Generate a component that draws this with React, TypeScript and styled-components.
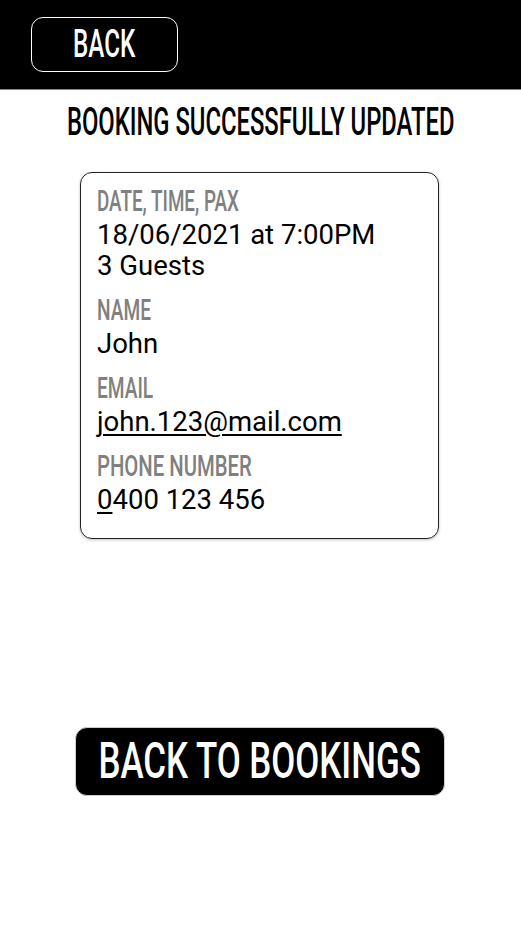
import React from "react";
import styled, { createGlobalStyle } from "styled-components";

const Global = createGlobalStyle`
  html, body { margin: 0; padding: 0; background: #fff; }
  body { font-family: Roboto, "Liberation Sans", sans-serif; }
`;

const Page = styled.div`
  width: 521px;
  min-height: 927px;
  display: flex;
  flex-direction: column;
  align-items: center;
  background: #fff;
  overflow: hidden;
`;

const Header = styled.header`
  align-self: stretch;
  height: 90px;
  background: #000;
  border-bottom: 1px solid #888;
  display: flex;
  align-items: flex-start;
  padding: 17px 0 0 31px;
  box-sizing: border-box;
`;

/* Condensed display text: a sans squeezed horizontally */
const Squeeze = styled.span<{ $scale: number; $origin?: string }>`
  display: inline-block;
  flex: none;
  white-space: nowrap;
  font-family: Roboto, "Liberation Sans", sans-serif;
  font-weight: 500;
  transform: scaleX(${(p) => p.$scale});
  transform-origin: ${(p) => p.$origin ?? "center"};
`;

const BackButton = styled.button`
  width: 147px;
  height: 55px;
  box-sizing: border-box;
  background: #000;
  border: 1.5px solid #fff;
  border-radius: 12px;
  color: #fff;
  font-size: 39px;
  line-height: 1;
  padding: 0;
  display: flex;
  align-items: center;
  justify-content: center;
`;

const Title = styled.h1`
  margin: 12px 0 0;
  width: 521px;
  display: flex;
  justify-content: center;
  font-size: 39px;
  font-weight: 500;
  color: #000;
  line-height: 40px;
`;

const Card = styled.section`
  margin-top: 30px;
  margin-left: -2px;
  width: 359px;
  box-sizing: border-box;
  border: 1.5px solid #222;
  border-radius: 12px;
  box-shadow: 0 1px 3px rgba(0, 0, 0, 0.25);
  padding: 11px 16px 23px;
  display: flex;
  flex-direction: column;
  gap: 12px;
`;

const Group = styled.div`
  display: flex;
  flex-direction: column;
  align-items: flex-start;
`;

const Label = styled.div`
  font-size: 29px;
  color: #808080;
  line-height: 35px;
`;

const Value = styled.div<{ $underline?: boolean }>`
  font-family: Roboto, "Liberation Sans", sans-serif;
  font-size: 27.5px;
  color: #000;
  line-height: 31px;
  text-decoration: ${(p) => (p.$underline ? "underline" : "none")};
  text-underline-offset: 3px;
  text-decoration-thickness: 1.5px;
`;

const Underlined = styled.span`
  text-decoration: underline;
  text-underline-offset: 3px;
  text-decoration-thickness: 1.5px;
`;

const PrimaryButton = styled.button`
  margin-top: 188px;
  margin-left: -2px;
  width: 370px;
  height: 69px;
  box-sizing: border-box;
  background: #000;
  border: 1px solid #ccc;
  border-radius: 12px;
  color: #fff;
  font-size: 50.5px;
  line-height: 1;
  padding: 0;
  display: flex;
  align-items: center;
  justify-content: center;
`;

export default function App() {
  return (
    <Page>
      <Global />
      <Header>
        <BackButton>
          <Squeeze $scale={0.62}>BACK</Squeeze>
        </BackButton>
      </Header>
      <Title>
        <Squeeze $scale={0.61}>BOOKING SUCCESSFULLY UPDATED</Squeeze>
      </Title>
      <Card>
        <Group>
          <Label>
            <Squeeze $scale={0.65} $origin="left">DATE, TIME, PAX</Squeeze>
          </Label>
          <Value>18/06/2021 at 7:00PM</Value>
          <Value>3 Guests</Value>
        </Group>
        <Group>
          <Label>
            <Squeeze $scale={0.66} $origin="left">NAME</Squeeze>
          </Label>
          <Value>John</Value>
        </Group>
        <Group>
          <Label>
            <Squeeze $scale={0.66} $origin="left">EMAIL</Squeeze>
          </Label>
          <Value $underline>john.123@mail.com</Value>
        </Group>
        <Group>
          <Label>
            <Squeeze $scale={0.7} $origin="left">PHONE NUMBER</Squeeze>
          </Label>
          <Value>
            <Underlined>0</Underlined>400 123 456
          </Value>
        </Group>
      </Card>
      <PrimaryButton>
        <Squeeze $scale={0.69}>BACK TO BOOKINGS</Squeeze>
      </PrimaryButton>
    </Page>
  );
}
